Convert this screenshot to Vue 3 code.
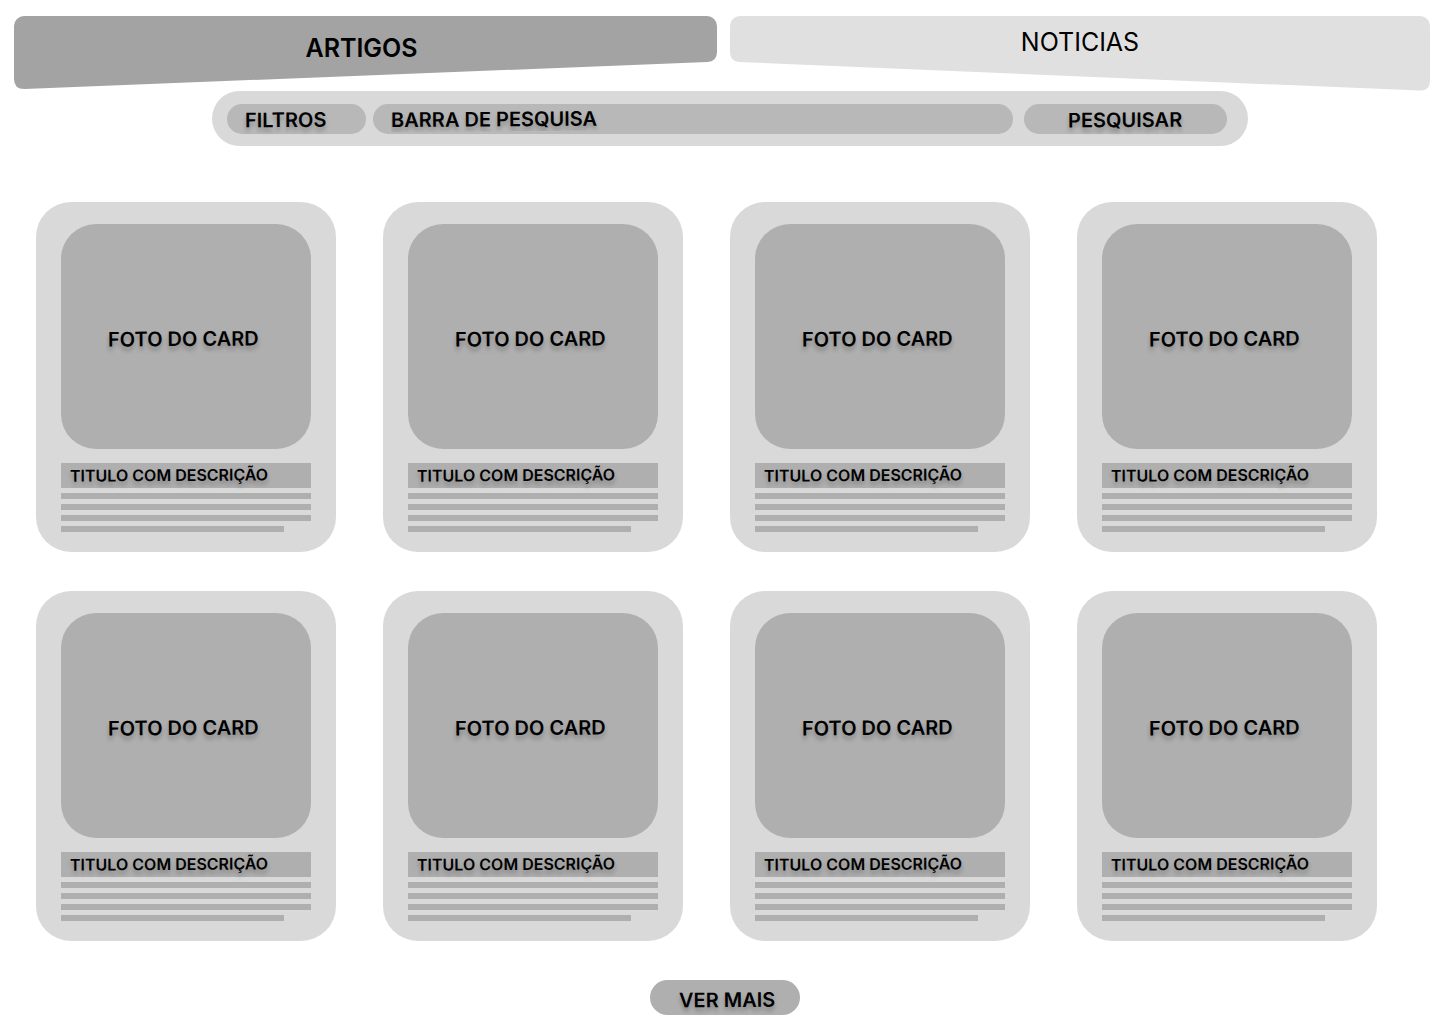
<script setup>
import { ref } from 'vue'

const busca = ref('')
const cards = Array.from({ length: 8 }, (_, i) => ({
  id: i + 1,
  foto: 'FOTO DO CARD',
  titulo: 'TITULO COM DESCRIÇÃO',
}))
</script>

<template>
  <div class="page">
    <nav class="tabs">
      <a href="#artigos" class="tab tab-active" aria-current="page">
        <svg class="tab-shape" viewBox="0 0 703 73" preserveAspectRatio="none" aria-hidden="true">
          <path fill="#a3a3a3" d="M10 0H693A10 10 0 0 1 703 10V36Q703 45.5 693.4 46L10.4 73Q0 73 0 63V10A10 10 0 0 1 10 0Z" />
        </svg>
        <span class="tab-label">ARTIGOS</span>
      </a>
      <a href="#noticias" class="tab">
        <svg class="tab-shape" viewBox="0 0 700 75" preserveAspectRatio="none" aria-hidden="true">
          <path fill="#e0e0e0" d="M10 0H690A10 10 0 0 1 700 10V65Q700 75 689.6 74.6L9.6 46Q0 45.5 0 36V10A10 10 0 0 1 10 0Z" />
        </svg>
        <span class="tab-label">NOTICIAS</span>
      </a>
    </nav>

    <div class="search-row">
      <form class="search" role="search" @submit.prevent>
        <button type="button" class="pill filters"><span class="tilt">FILTROS</span></button>
        <label class="pill field">
          <input v-model="busca" class="tilt" type="text" aria-label="Barra de pesquisa" placeholder="BARRA DE PESQUISA" />
        </label>
        <button type="submit" class="pill submit"><span class="tilt">PESQUISAR</span></button>
      </form>
    </div>

    <main class="cards">
      <article v-for="card in cards" :key="card.id" class="card">
        <div class="photo"><span class="tilt">{{ card.foto }}</span></div>
        <h2 class="title"><span class="tilt">{{ card.titulo }}</span></h2>
        <div class="lines" aria-hidden="true">
          <i></i><i></i><i></i><i class="short"></i>
        </div>
      </article>
    </main>

    <footer class="more-row">
      <button type="button" class="more"><span class="tilt">VER MAIS</span></button>
    </footer>
  </div>
</template>

<style>
body {
  margin: 0;
  background: #fff;
}
</style>

<style scoped>
.page {
  box-sizing: border-box;
  padding: 16px 0 9px;
  font-family: Inter, sans-serif;
  font-size: 20px;
  font-weight: 600;
  line-height: 24px;
  color: #000;
}

.page * {
  box-sizing: border-box;
}

button {
  border: 0;
  padding: 0;
  font: inherit;
  color: inherit;
  cursor: pointer;
}

.tilt {
  display: inline-block;
  transform: rotate(-0.4deg);
  text-shadow: 0 4px 4px rgba(0, 0, 0, 0.25);
}

.tabs {
  display: grid;
  grid-template-columns: 703fr 700fr;
  align-items: start;
  gap: 13px;
  padding: 0 10px 0 14px;
}

.tab {
  position: relative;
  height: 75px;
  padding-top: 11px;
  text-align: center;
  font-size: 25px;
  font-weight: 400;
  line-height: 30px;
  color: inherit;
  text-decoration: none;
}

.tab-active {
  height: 73px;
  padding: 17px 8px 0 0;
  font-weight: 600;
}

.tab-shape {
  position: absolute;
  inset: 0;
  width: 100%;
  height: 100%;
}

.tab-label {
  position: relative;
}

.search-row {
  display: flex;
  justify-content: center;
  padding-left: 20px;
}

.search {
  display: flex;
  width: 100%;
  max-width: 1036px;
  padding: 13px 21px 12px 15px;
  border-radius: 28px;
  background: #d9d9d9;
}

.pill {
  height: 30px;
  border-radius: 15px;
  background: #b8b8b8;
}

.filters {
  width: 139px;
  padding: 2px 0 0 18px;
  text-align: left;
}

.field {
  flex: 1;
  display: flex;
  min-width: 0;
  margin: 0 11px 0 7px;
  padding: 0 18px;
}

.field input {
  width: 300px;
  height: 30px;
  padding: 0;
  border: 0;
  outline: 0;
  background: none;
  font: inherit;
  color: inherit;
}

.field input::placeholder {
  color: #000;
  opacity: 1;
}

.submit {
  width: 203px;
  padding-top: 2px;
}

.cards {
  display: grid;
  grid-template-columns: repeat(auto-fill, 300px);
  gap: 39px 47px;
  padding: 56px 36px 39px;
}

.card {
  padding: 22px 25px 20px;
  border-radius: 35px;
  background: #d9d9d9;
}

.photo {
  display: flex;
  align-items: center;
  justify-content: center;
  height: 225px;
  padding: 4px 5px 0 0;
  border-radius: 35px;
  background: #afafaf;
}

.title {
  height: 25px;
  margin: 14px 0 5px;
  padding-left: 9px;
  background: #afafaf;
  font-size: 16px;
  font-weight: 600;
  line-height: 24px;
}

.lines {
  display: grid;
  gap: 5px;
}

.lines i {
  height: 6px;
  background: #afafaf;
}

.lines .short {
  width: 223px;
}

.more-row {
  display: flex;
  justify-content: center;
  padding-left: 10px;
}

.more {
  width: 150px;
  height: 35px;
  padding: 4px 0 0 4px;
  border-radius: 18px;
  background: #afafaf;
}
</style>
